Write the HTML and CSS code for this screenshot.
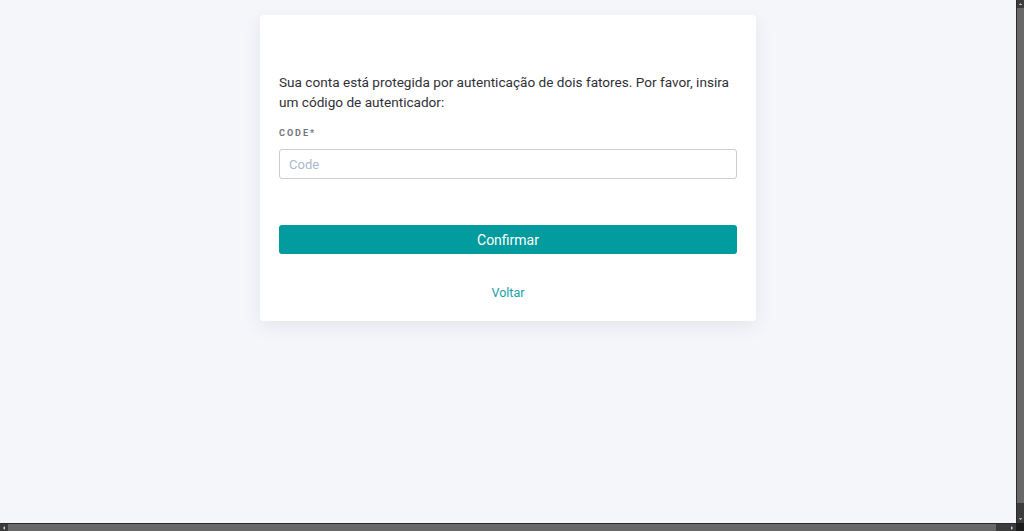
FILE: index.html
```html
<!DOCTYPE html>
<html lang="pt">
<head>
<meta charset="utf-8">
<title>Autenticação de dois fatores</title>
<link rel="stylesheet" href="styles.css">
</head>
<body>
<div class="viewport">
  <main class="page">
    <section class="card">
      <p class="intro">Sua conta está protegida por autenticação de dois fatores. Por favor, insira um código de autenticador:</p>
      <form class="form">
        <label class="label" for="code">CODE*</label>
        <input class="input" id="code" type="text" placeholder="Code">
        <button class="btn" type="button">Confirmar</button>
      </form>
      <a class="back" href="#">Voltar</a>
    </section>
  </main>
  <div class="vbar" aria-hidden="true">
    <span class="sb-btn"><svg width="8" height="8" viewBox="0 0 8 8"><path d="M2 5h4L4 3z" fill="#d0d0d0"/></svg></span>
    <span class="sb-thumb"></span>
    <span class="sb-track"></span>
    <span class="sb-btn"><svg width="8" height="8" viewBox="0 0 8 8"><path d="M2 3h4L4 5z" fill="#d0d0d0"/></svg></span>
  </div>
  <div class="hbar" aria-hidden="true">
    <span class="sb-btn"><svg width="8" height="8" viewBox="0 0 8 8"><path d="M5 2v4L3 4z" fill="#d0d0d0"/></svg></span>
    <span class="sb-thumb"></span>
    <span class="sb-track"></span>
    <span class="sb-btn"><svg width="8" height="8" viewBox="0 0 8 8"><path d="M3 2v4L5 4z" fill="#d0d0d0"/></svg></span>
  </div>
  <div class="corner" aria-hidden="true"></div>
</div>
</body>
</html>
```
FILE: styles.css
```css
html, body {
  margin: 0;
  height: 100%;
  overflow: hidden;
}
body {
  font-family: Roboto, "Noto Sans", sans-serif;
  color: #2d3038;
  background: #f5f6fa;
}
.viewport {
  display: grid;
  grid-template-columns: 1fr 8px;
  grid-template-rows: 1fr 8px;
  height: 100vh;
}
.page {
  display: flex;
  justify-content: center;
  align-items: flex-start;
  padding-top: 15px;
  min-width: 0;
}
.card {
  width: 458px;
  background: #fff;
  border-radius: 4px;
  box-shadow: 0 6px 18px rgba(40, 50, 80, 0.08);
  padding: 57px 19px 19px;
  display: flex;
  flex-direction: column;
}
.intro {
  margin: 0;
  font-size: 13.6px;
  line-height: 20px;
  color: #2f3136;
}
.form {
  display: flex;
  flex-direction: column;
}
.label {
  margin-top: 14px;
  font-size: 9px;
  line-height: 14px;
  font-weight: 700;
  letter-spacing: 2px;
  color: #70747e;
}
.input {
  margin-top: 9px;
  height: 30px;
  box-sizing: border-box;
  border: 1px solid #c9ccd3;
  border-radius: 3px;
  padding: 0 9px;
  font-family: inherit;
  font-size: 13px;
  color: #2f3136;
}
.input::placeholder {
  color: #a9b8cc;
}
.btn {
  margin-top: 46px;
  height: 29px;
  border: 0;
  border-radius: 3px;
  background: #029b9e;
  color: #fff;
  font-family: inherit;
  font-size: 14px;
}
.back {
  margin-top: 30px;
  align-self: center;
  font-size: 12.5px;
  line-height: 18px;
  color: #1a9ea6;
  text-decoration: none;
}
.vbar, .hbar {
  display: flex;
  background: #3b3b3b;
}
.vbar {
  flex-direction: column;
  border-left: 1px solid #2a2a2a;
}
.hbar {
  border-top: 1px solid #2a2a2a;
}
.sb-btn {
  flex: 0 0 8px;
  display: flex;
  align-items: center;
  justify-content: center;
  background: #3b3b3b;
}
.sb-thumb {
  flex: 1;
  background: #686868;
}
.sb-track {
  flex: 0 0 12px;
}
.corner {
  background: #1c1c1c;
}
```
